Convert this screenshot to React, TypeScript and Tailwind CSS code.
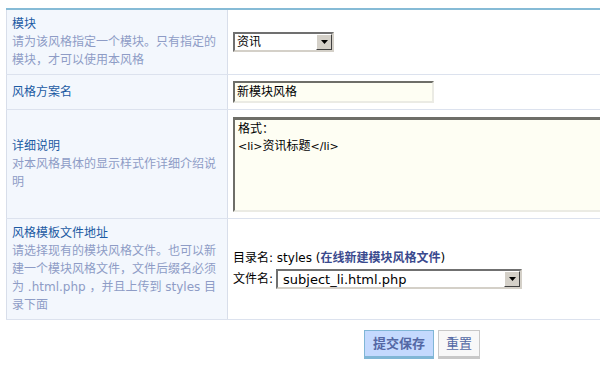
import React from "react";

const Arrow = () => (
    <div className="w-[16px] h-[16px] bg-[#D4D0C8] border-t border-l border-t-white border-l-white border-r border-b border-r-[#404040] border-b-[#404040] flex items-center justify-center">
        <svg width="7" height="4" viewBox="0 0 7 4"><path d="M0 0h7L3.5 4z" fill="#000" /></svg>
    </div>
);

function FakeSelect({ value, width, big }: { value: string; width: string; big?: boolean }) {
    return (
        <div className={`${width} h-[20px] bg-white border-2 border-t-[#707070] border-l-[#707070] border-b-[#D4D0C8] border-r-[#D4D0C8] flex items-center justify-between`}>
            <span className={big ? "pl-[5px] text-[13px] leading-none" : "pl-[2px] leading-none"}>{value}</span>
            <Arrow />
        </div>
    );
}

function Label({ title, children }: { title: string; children?: React.ReactNode }) {
    return (
        <div className="box-border w-[222px] shrink-0 border-l border-r border-[#D8DEEA] bg-[#F3F7FD] px-[5px] flex flex-col justify-center leading-[18px]">
            <div className="text-[#1B5AA3]">{title}</div>
            {children && <div className="text-[#8E9CC6] whitespace-nowrap">{children}</div>}
        </div>
    );
}

export default function App() {
    const row = "flex border-b border-[#DCE2EE]";
    return (
        <div className="w-[600px] h-[368px] overflow-hidden bg-white text-[12px] text-black font-['DejaVu_Sans','Noto_Sans_CJK_SC',sans-serif]">
            <div className="ml-[6px] mt-[8px] w-[660px] border-t-2 border-[#86BBD6]">
                <div className={`${row} h-[65px]`}>
                    <Label title="模块">
                        请为该风格指定一个模块。只有指定的<br />模块，才可以使用本风格
                    </Label>
                    <div className="flex items-center pl-[5px]">
                        <FakeSelect value="资讯" width="w-[101px]" />
                    </div>
                </div>
                <div className={`${row} h-[35px]`}>
                    <Label title="风格方案名" />
                    <div className="flex items-center pl-[5px]">
                        <div className="w-[201px] h-[22px] bg-[#FEFEF3] border-2 border-t-[#6E6E68] border-l-[#6E6E68] border-b-[#EBEBE4] border-r-[#EBEBE4] flex items-center pl-[2px]">
                            新模块风格
                        </div>
                    </div>
                </div>
                <div className={`${row} h-[109px]`}>
                    <Label title="详细说明">
                        对本风格具体的显示样式作详细介绍说<br />明
                    </Label>
                    <div className="flex items-center pl-[5px]">
                        <div className="w-[420px] h-[95px] bg-[#FEFEF3] border-2 border-t-[3px] border-t-[#6E6E68] border-l-[#6E6E68] border-b-[#EBEBE4] border-r-[#EBEBE4] pl-[3px] pt-[1px] leading-[17px] text-[11px]">
                            <div className="text-[12px]">格式：</div>
                            <div>{"<li>"}<span className="text-[12px]">资讯标题</span>{"</li>"}</div>
                        </div>
                    </div>
                </div>
                <div className={`${row} h-[101px]`}>
                    <Label title="风格模板文件地址">
                        请选择现有的模块风格文件。也可以新<br />
                        建一个模块风格文件，文件后缀名必须<br />
                        为 .html.php ，并且上传到 styles 目<br />
                        录下面
                    </Label>
                    <div className="flex flex-col justify-center pl-[5px] gap-[2px]">
                        <div className="leading-[18px]">
                            目录名: styles (<span className="font-bold text-[#3A4A8E]">在线新建模块风格文件</span>)
                        </div>
                        <div className="flex items-center">
                            <span className="mr-[3px]">文件名:</span>
                            <FakeSelect value="subject_li.html.php" width="w-[246px]" big />
                        </div>
                    </div>
                </div>
            </div>
            <div className="flex gap-[4px] pl-[364px] mt-[10px]">
                <button type="button" className="w-[70px] h-[29px] bg-[#C4D9FE] border border-[#80B6D6] border-b-[3px] text-[#5468A5] font-bold text-[13px] leading-none">
                    提交保存
                </button>
                <button type="button" className="w-[42px] h-[29px] bg-[#F8F8F8] border border-[#C8C8C8] border-b-[3px] text-[#5468A5] text-[13px] leading-none">
                    重置
                </button>
            </div>
        </div>
    );
}
